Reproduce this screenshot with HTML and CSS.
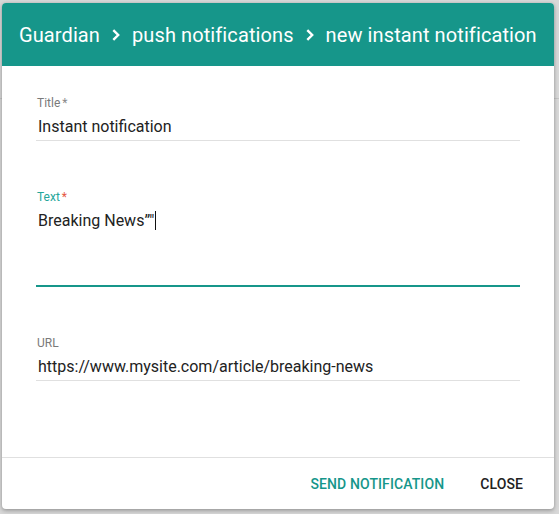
FILE: index.html
```html
<!DOCTYPE html>
<html>
<head>
<meta charset="utf-8">
<link rel="stylesheet" href="styles.css">
</head>
<body>
<div class="backdrop-line"></div>
<div class="dialog">
  <div class="header">
    <span>Guardian</span>
    <svg class="chev" viewBox="0 0 24 24" width="24" height="24"><path d="M9.3 7.1 L14.2 12 L9.3 16.9" fill="none" stroke="#fff" stroke-width="2.4"/></svg>
    <span>push notifications</span>
    <svg class="chev" viewBox="0 0 24 24" width="24" height="24"><path d="M9.3 7.1 L14.2 12 L9.3 16.9" fill="none" stroke="#fff" stroke-width="2.4"/></svg>
    <span>new instant notification</span>
  </div>
  <div class="content">
    <div class="field">
      <div class="label">Title<span class="req">*</span></div>
      <div class="input">Instant notification</div>
    </div>
    <div class="field focused">
      <div class="label">Text<span class="req">*</span></div>
      <div class="input textarea">Breaking News”"<span class="caret"></span></div>
    </div>
    <div class="field">
      <div class="label">URL</div>
      <div class="input">https://www.mysite.com/article/breaking-news</div>
    </div>
  </div>
  <div class="footer">
    <button class="btn primary">Send notification</button>
    <button class="btn">Close</button>
  </div>
</div>
</body>
</html>
```
FILE: styles.css
```css
html, body {
  margin: 0;
  padding: 0;
}
body {
  background: #d8d8d8;
  font-family: Roboto, "Noto Sans", sans-serif;
  width: 559px;
  height: 514px;
  overflow: hidden;
  position: relative;
}
.backdrop-line {
  position: absolute;
  left: 0;
  right: 0;
  top: 98px;
  height: 1px;
  background: #c4c4c4;
}
.dialog {
  position: relative;
  margin: 3px 0 0 2px;
  width: 552px;
  height: 506px;
  background: #fff;
  border-radius: 4px;
  box-shadow: 0 2px 4px rgba(0,0,0,0.25), 0 0 3px rgba(0,0,0,0.12);
  display: flex;
  flex-direction: column;
  overflow: hidden;
}
.header {
  height: 63px;
  flex: none;
  background: #16968a;
  color: #fff;
  display: flex;
  align-items: center;
  padding-left: 17px;
  font-size: 20px;
  letter-spacing: 0.1px;
}
.chev {
  margin: 0 4px 0 4px;
  flex: none;
}
.content {
  flex: 1;
  padding: 30px 34px 0 34px;
}
.field {
  margin-bottom: 49px;
}
.label {
  font-size: 12px;
  line-height: 14px;
  color: #7a7a7a;
  padding-left: 1px;
}
.req {
  margin-left: 2px;
  color: #8a8a8a;
}
.focused .label {
  color: #26a69a;
}
.focused .req {
  color: #e5573f;
}
.input {
  font-size: 16px;
  line-height: 20px;
  color: #222;
  padding: 7px 0 3px 2px;
  border-bottom: 1px solid #e0e0e0;
}
.textarea {
  height: 74px;
  padding-bottom: 0;
  border-bottom: 2px solid #16968a;
}
.caret {
  display: inline-block;
  width: 1px;
  height: 19px;
  background: #111;
  vertical-align: -4px;
  margin-left: 1px;
}
.footer {
  flex: none;
  height: 51px;
  border-top: 1px solid #e0e0e0;
  display: flex;
  align-items: center;
  justify-content: flex-end;
  padding-right: 23px;
  gap: 20px;
}
.btn {
  font-family: Roboto, "Noto Sans", sans-serif;
  font-size: 14px;
  font-weight: 500;
  text-transform: uppercase;
  background: none;
  border: none;
  padding: 8px;
  margin-top: 1px;
  color: #222;
  letter-spacing: 0.1px;
}
.btn.primary {
  color: #16968a;
}
```
